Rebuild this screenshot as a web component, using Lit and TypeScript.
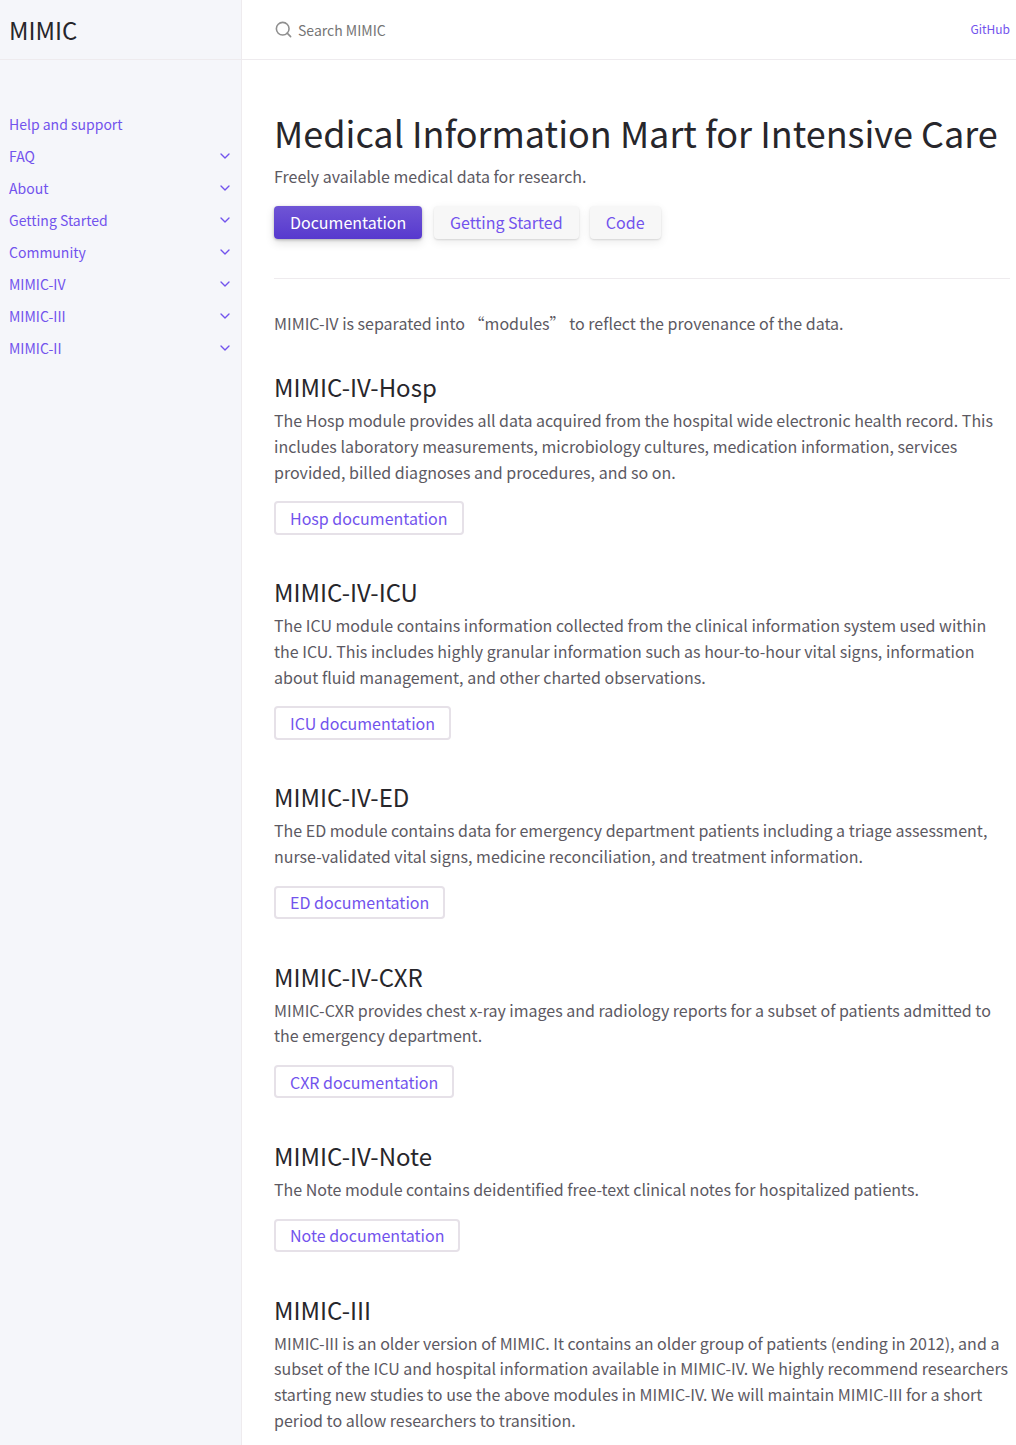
import {LitElement, html, css} from 'lit';
import {customElement} from 'lit/decorators.js';

const navItems = [
  {title: 'Help and support', children: false},
  {title: 'FAQ', children: true},
  {title: 'About', children: true},
  {title: 'Getting Started', children: true},
  {title: 'Community', children: true},
  {title: 'MIMIC-IV', children: true},
  {title: 'MIMIC-III', children: true},
  {title: 'MIMIC-II', children: true},
];

const modules = [
  {
    title: 'MIMIC-IV-Hosp',
    text: 'The Hosp module provides all data acquired from the hospital wide electronic health record. This includes laboratory measurements, microbiology cultures, medication information, services provided, billed diagnoses and procedures, and so on.',
    button: 'Hosp documentation',
  },
  {
    title: 'MIMIC-IV-ICU',
    text: 'The ICU module contains information collected from the clinical information system used within the ICU. This includes highly granular information such as hour-to-hour vital signs, information about fluid management, and other charted observations.',
    button: 'ICU documentation',
  },
  {
    title: 'MIMIC-IV-ED',
    text: 'The ED module contains data for emergency department patients including a triage assessment, nurse-validated vital signs, medicine reconciliation, and treatment information.',
    button: 'ED documentation',
  },
  {
    title: 'MIMIC-IV-CXR',
    text: 'MIMIC-CXR provides chest x-ray images and radiology reports for a subset of patients admitted to the emergency department.',
    button: 'CXR documentation',
  },
  {
    title: 'MIMIC-IV-Note',
    text: 'The Note module contains deidentified free-text clinical notes for hospitalized patients.',
    button: 'Note documentation',
  },
  {
    title: 'MIMIC-III',
    text: 'MIMIC-III is an older version of MIMIC. It contains an older group of patients (ending in 2012), and a subset of the ICU and hospital information available in MIMIC-IV. We highly recommend researchers starting new studies to use the above modules in MIMIC-IV. We will maintain MIMIC-III for a short period to allow researchers to transition.',
    button: '',
  },
];

@customElement('app-root')
export class AppRoot extends LitElement {
  static override styles = css`
    * {
      box-sizing: border-box;
      margin: 0;
      padding: 0;
    }

    :host {
      display: flex;
      height: 1445px;
      overflow: hidden;
      background: #fff;
      color: #5c5962;
      font-family: "Noto Sans CJK SC", "Noto Sans", sans-serif;
      font-size: 16px;
      line-height: 1.6;
    }

    a {
      color: #7253ed;
      text-decoration: none;
    }

    .side-bar {
      width: 242px;
      flex: none;
      background: #f5f6fa;
      border-right: 1px solid #eeebee;
    }

    .site-header {
      height: 60px;
      display: flex;
      align-items: center;
      padding-left: 9px;
      border-bottom: 1px solid #eeebee;
    }

    .site-title {
      color: #27262b;
      font-size: 24px;
      line-height: 30px;
    }

    .nav-list {
      list-style: none;
      padding-top: 48px;
      font-size: 14px;
      line-height: 32px;
    }

    .nav-item {
      height: 32px;
      display: flex;
      align-items: center;
      justify-content: space-between;
      padding: 0 8px 0 9px;
    }

    .nav-item svg {
      width: 16px;
      height: 16px;
      color: #7253ed;
    }

    .main {
      flex: 1;
      min-width: 0;
    }

    .main-header {
      height: 60px;
      display: flex;
      align-items: center;
      justify-content: space-between;
      padding: 0 6px 0 32px;
      border-bottom: 1px solid #eeebee;
    }

    .search {
      display: flex;
      align-items: center;
      gap: 5px;
      color: #757575;
      font-size: 14px;
    }

    .search span {
      padding-top: 2px;
    }

    .search svg {
      width: 19px;
      height: 19px;
      color: #8f8f8f;
    }

    .aux-link {
      font-size: 12px;
      padding-bottom: 2px;
    }

    .content {
      padding: 50px 6px 0 32px;
    }

    h1 {
      color: #27262b;
      font-size: 36px;
      font-weight: 400;
      line-height: 45px;
      margin-bottom: 9px;
    }

    .buttons {
      display: flex;
      margin-top: 16px;
    }

    .btn {
      display: inline-block;
      height: 33px;
      padding: 0 16px;
      border-radius: 4px;
      background: #f7f7f7;
      box-shadow: 0 1px 2px rgba(0, 0, 0, 0.12), 0 3px 10px rgba(0, 0, 0, 0.08);
      line-height: 33px;
      white-space: nowrap;
    }

    .btn + .btn {
      margin-left: 11.2px;
    }

    .btn-primary {
      color: #fff;
      background: linear-gradient(#6f55d5, #5739ce);
      box-shadow: 0 1px 3px rgba(0, 0, 0, 0.25), 0 4px 10px rgba(0, 0, 0, 0.12);
    }

    .btn-primary + .btn {
      margin-left: 11.6px;
    }

    .btn-outline {
      display: block;
      width: fit-content;
      height: 33.3px;
      margin-top: 16.1px;
      padding-top: 0.5px;
      background: transparent;
      box-shadow: inset 0 0 0 2px #e6e1e8;
    }

    hr {
      height: 1px;
      margin: 39px 0 32px;
      border: 0;
      background: #eeebee;
    }

    section {
      margin-top: 36.28px;
    }

    section + section {
      margin-top: 42.79px;
    }

    h2 {
      color: #27262b;
      font-size: 24px;
      font-weight: 400;
      line-height: 30px;
      margin-bottom: 6px;
    }
  `;

  renderArrow() {
    return html`
      <svg viewBox="0 0 24 24" fill="none" stroke="currentColor" stroke-width="2" stroke-linecap="round" stroke-linejoin="round">
        <polyline points="6 9 12 15 18 9"></polyline>
      </svg>
    `;
  }

  override render() {
    return html`
      <div class="side-bar">
        <div class="site-header"><a class="site-title">MIMIC</a></div>
        <ul class="nav-list">
          ${navItems.map(item => html`
            <li class="nav-item">
              <a>${item.title}</a>
              ${item.children ? this.renderArrow() : ''}
            </li>
          `)}
        </ul>
      </div>
      <div class="main">
        <div class="main-header">
          <div class="search">
            <svg viewBox="0 0 24 24" fill="none" stroke="currentColor" stroke-width="2" stroke-linecap="round" stroke-linejoin="round">
              <circle cx="11" cy="11" r="8"></circle>
              <line x1="21" y1="21" x2="16.65" y2="16.65"></line>
            </svg>
            <span>Search MIMIC</span>
          </div>
          <a class="aux-link">GitHub</a>
        </div>
        <div class="content">
          <h1>Medical Information Mart for Intensive Care</h1>
          <p>Freely available medical data for research.</p>
          <div class="buttons">
            <a class="btn btn-primary">Documentation</a>
            <a class="btn">Getting Started</a>
            <a class="btn">Code</a>
          </div>
          <hr>
          <p>MIMIC-IV is separated into “modules” to reflect the provenance of the data.</p>
          ${modules.map(module => html`
            <section>
              <h2>${module.title}</h2>
              <p>${module.text}</p>
              ${module.button ? html`<a class="btn btn-outline">${module.button}</a>` : ''}
            </section>
          `)}
        </div>
      </div>
    `;
  }
}

declare global {
  interface HTMLElementTagNameMap {
    'app-root': AppRoot;
  }
}
